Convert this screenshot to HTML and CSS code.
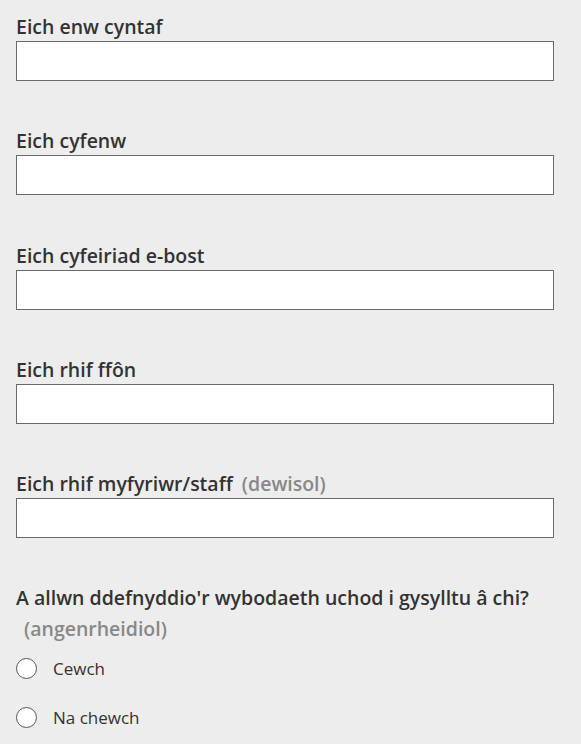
FILE: index.html
```html
<!DOCTYPE html>
<html lang="cy">
<head>
<meta charset="utf-8">
<title>Ffurflen</title>
<link rel="stylesheet" href="styles.css">
</head>
<body>
<form class="form">
  <div class="field">
    <label class="label" for="f1">Eich enw cyntaf</label>
    <input class="input" id="f1" type="text">
  </div>
  <div class="field">
    <label class="label" for="f2">Eich cyfenw</label>
    <input class="input" id="f2" type="text">
  </div>
  <div class="field">
    <label class="label" for="f3">Eich cyfeiriad e-bost</label>
    <input class="input" id="f3" type="email">
  </div>
  <div class="field">
    <label class="label" for="f4">Eich rhif ffôn</label>
    <input class="input" id="f4" type="tel">
  </div>
  <div class="field">
    <label class="label" for="f5">Eich rhif myfyriwr/staff <span class="hint">(dewisol)</span></label>
    <input class="input" id="f5" type="text">
  </div>
  <fieldset class="group">
    <legend class="question">A allwn ddefnyddio'r wybodaeth uchod i gysylltu â chi? <span class="hint hint-wrap">(angenrheidiol)</span></legend>
    <label class="radio"><input class="radio-input" type="radio" name="contact"><span>Cewch</span></label>
    <label class="radio"><input class="radio-input" type="radio" name="contact"><span>Na chewch</span></label>
  </fieldset>
</form>
</body>
</html>
```
FILE: styles.css
```css
html, body {
  margin: 0;
  padding: 0;
  background: #ededed;
}
body {
  font-family: "Open Sans", "Noto Sans", sans-serif;
  color: #333;
}
.form {
  padding: 13px 27px 0 16px;
}
.field {
  display: flex;
  flex-direction: column;
  margin-bottom: 46.25px;
}
.label {
  font-size: 19.5px;
  font-weight: 600;
  line-height: 28px;
}
.hint {
  color: #888;
  margin-left: 4px;
}
.hint-wrap {
  margin-left: 8px;
}
.input {
  box-sizing: border-box;
  width: 538px;
  height: 40px;
  margin: 0;
  border: 1px solid #6b6b6b;
  background: #fff;
  border-radius: 0;
  font: inherit;
}
.group {
  border: 0;
  margin: -2px 0 0;
  padding: 0;
  min-width: 0;
}
.question {
  padding: 0;
  font-size: 19.5px;
  font-weight: 600;
  line-height: 31px;
  margin-bottom: 11px;
}
.radio {
  display: flex;
  align-items: center;
  gap: 16px;
  font-size: 17px;
  height: 26px;
  margin-bottom: 23px;
}
.radio-input {
  appearance: none;
  -webkit-appearance: none;
  box-sizing: border-box;
  width: 21px;
  height: 21px;
  margin: 0;
  border: 1px solid #555;
  border-radius: 50%;
  background: #fff;
}
```
